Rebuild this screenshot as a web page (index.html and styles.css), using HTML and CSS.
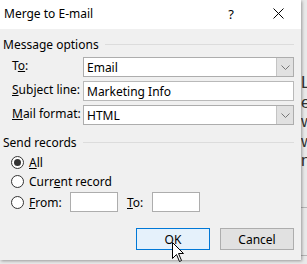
FILE: index.html
```html
<!DOCTYPE html>
<html>
<head>
<meta charset="utf-8">
<link rel="stylesheet" href="styles.css">
</head>
<body>
<div class="doc">
  <div class="doc-lines">
    <p>L</p>
    <p>e</p>
    <p>w</p>
    <p>w</p>
    <p>n</p>
  </div>
  <div class="doc-rule r1"></div>
  <div class="doc-rule r2"></div>
</div>

<div class="dialog">
  <div class="titlebar">
    <span class="title">Merge to E-mail</span>
    <span class="help">?</span>
    <svg class="close" width="11" height="11" viewBox="0 0 11 11"><path d="M0.5 0.5L10.5 10.5M10.5 0.5L0.5 10.5" stroke="#000" stroke-width="1" fill="none"/></svg>
  </div>
  <div class="body">
    <div class="group-head"><span>Message options</span><span class="rule"></span></div>
    <div class="rows">
      <div class="row">
        <label class="lbl">T<u>o</u>:</label>
        <div class="combo"><span class="val">Email</span><span class="btn"><svg width="9" height="5" viewBox="0 0 9 5"><path d="M0.5 0.5L4.5 4.5L8.5 0.5" stroke="#777" fill="none"/></svg></span></div>
      </div>
      <div class="row">
        <label class="lbl"><u>S</u>ubject line:</label>
        <div class="input"><span class="val">Marketing Info</span></div>
      </div>
      <div class="row">
        <label class="lbl"><u>M</u>ail format:</label>
        <div class="combo"><span class="val">HTML</span><span class="btn"><svg width="9" height="5" viewBox="0 0 9 5"><path d="M0.5 0.5L4.5 4.5L8.5 0.5" stroke="#777" fill="none"/></svg></span></div>
      </div>
    </div>
    <div class="group-head g2"><span>Send records</span><span class="rule"></span></div>
    <div class="radios">
      <div class="radio-row"><span class="radio on"></span><span><u>A</u>ll</span></div>
      <div class="radio-row"><span class="radio"></span><span>Curr<u>e</u>nt record</span></div>
      <div class="radio-row from"><span class="radio"></span><span class="from-lbl"><u>F</u>rom:</span><span class="box"></span><span class="to-lbl"><u>T</u>o:</span><span class="box"></span></div>
    </div>
    <div class="buttons">
      <button class="b ok">OK</button>
      <button class="b">Cancel</button>
    </div>
  </div>
</div>
<svg class="cursor" width="13" height="21" viewBox="0 0 13 21"><path d="M0.5 0.5L0.5 16.5L4.5 12.5L7.5 19.5L9.5 18.5L6.5 11.5L11.5 11.5Z" fill="#fff" stroke="#000" stroke-width="1" stroke-linejoin="miter"/></svg>
</body>
</html>
```

FILE: styles.css
```css
html, body {
  margin: 0;
  padding: 0;
}
body {
  width: 307px;
  height: 264px;
  position: relative;
  overflow: hidden;
  font-family: "Noto Sans", "Open Sans", sans-serif;
  font-size: 12px;
  color: #000;
  background: #fff;
}
.doc {
  position: absolute;
  left: 0;
  top: 0;
  width: 307px;
  height: 264px;
  background: #e9e9e9;
}
.doc-lines {
  position: absolute;
  left: 301px;
  top: 73px;
  font-family: "Liberation Sans", sans-serif;
  font-size: 17px;
  color: #333;
}
.doc-lines p {
  margin: 0;
  line-height: 19.5px;
}
.doc-rule {
  position: absolute;
  left: 301px;
  right: 0;
  height: 1px;
  background: #b5b5b5;
}
.r1 { top: 207px; }
.r2 { top: 255px; }

.dialog {
  position: absolute;
  left: 0;
  top: 0;
  width: 301px;
  height: 260px;
  background: #f0f0f0;
  box-shadow: 1px 1px 3px rgba(0,0,0,0.35);
  display: flex;
  flex-direction: column;
}
.titlebar {
  height: 29px;
  background: #fff;
  display: flex;
  align-items: center;
  padding-left: 4px;
  flex-shrink: 0;
}
.title {
  font-size: 12px;
  flex: 1;
  padding-bottom: 2px;
}
.help {
  font-size: 13px;
  margin-right: 39px;
  padding-bottom: 2px;
}
.close {
  margin-right: 17px;
  margin-bottom: 2px;
}
.body {
  padding: 7px 7px 0 3px;
  display: flex;
  flex-direction: column;
}
.group-head {
  display: flex;
  align-items: center;
  height: 16px;
}
.group-head .rule {
  flex: 1;
  height: 1px;
  background: #dcdcdc;
  margin-left: 6px;
}
.rows {
  margin-top: 5px;
  padding-left: 9px;
  display: flex;
  flex-direction: column;
  gap: 4px;
}
.row {
  display: flex;
  align-items: center;
  height: 20px;
}
.lbl {
  width: 71px;
  flex-shrink: 0;
  padding-bottom: 4px;
}
.combo, .input {
  flex: 1;
  height: 20px;
  box-sizing: border-box;
  border: 1px solid #adadad;
  background: #fff;
  display: flex;
  align-items: center;
}
.input {
  border-color: #b9b9b9;
}
.val {
  flex: 1;
  padding-left: 3px;
}
.btn {
  width: 16px;
  height: 18px;
  background: #e1e1e1;
  border-left: 1px solid #c4c4c4;
  display: flex;
  align-items: center;
  justify-content: center;
}
.g2 {
  margin-top: 9px;
}
.radios {
  margin-top: 3px;
  padding-left: 8px;
  display: flex;
  flex-direction: column;
}
.radio-row {
  display: flex;
  align-items: center;
  height: 19px;
  gap: 5px;
}
.radio-row.from {
  height: 22px;
}
.radio {
  width: 13px;
  height: 13px;
  box-sizing: border-box;
  border: 1px solid #333;
  border-radius: 50%;
  background: #fff;
  display: flex;
  align-items: center;
  justify-content: center;
}
.radio.on::after {
  content: "";
  width: 7px;
  height: 7px;
  border-radius: 50%;
  background: #333;
}
.from-lbl {
  width: 36px;
}
.box {
  width: 48px;
  height: 20px;
  box-sizing: border-box;
  border: 1px solid #adadad;
  background: #fff;
}
.to-lbl {
  margin-left: 4px;
  width: 20px;
}
.buttons {
  display: flex;
  justify-content: flex-end;
  gap: 10px;
  margin-top: 15px;
}
.b {
  width: 74px;
  height: 22px;
  box-sizing: border-box;
  border: 1px solid #adadad;
  background: #e1e1e1;
  font-family: "Noto Sans", "Open Sans", sans-serif;
  font-size: 12px;
  color: #000;
  padding: 0;
}
.b.ok {
  border-color: #0078d7;
  background: #e5f1fb;
}
.cursor {
  position: absolute;
  left: 172px;
  top: 242px;
}
```
